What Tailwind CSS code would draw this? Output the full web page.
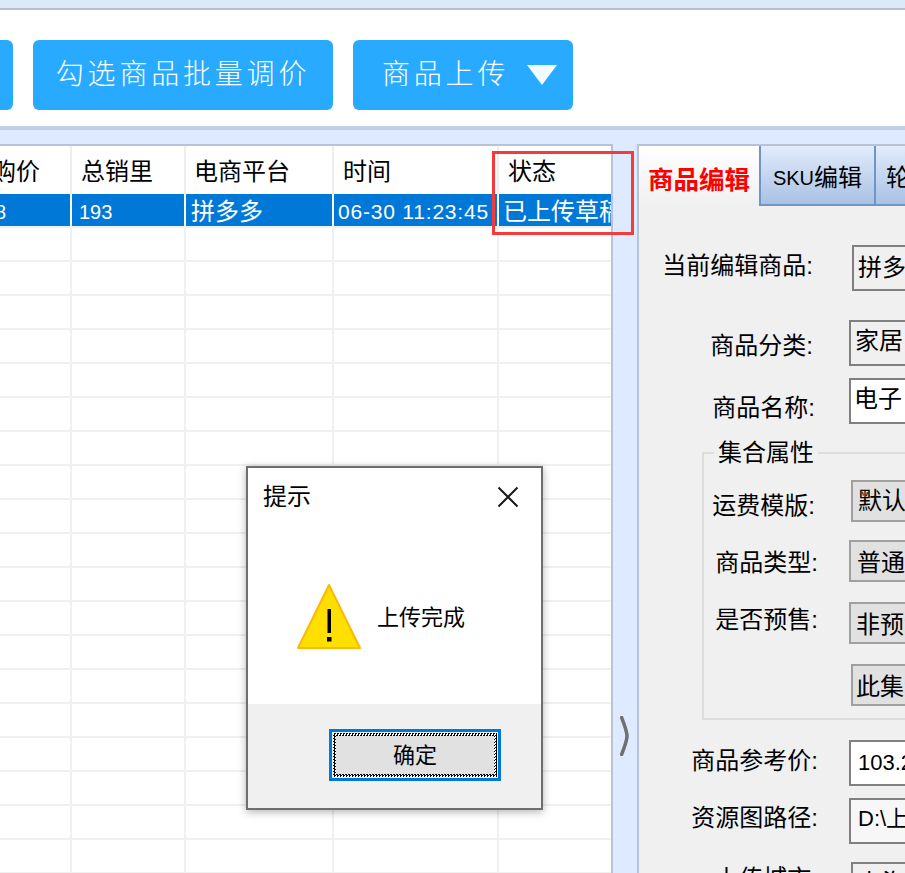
<!DOCTYPE html>
<html lang="zh-CN">
<head>
  <meta charset="UTF-8" />
  <title>商品上传</title>
  <script src="https://cdn.jsdelivr.net/npm/@tailwindcss/browser@4"></script>
</head>
<body class="relative w-[905px] h-[873px] overflow-hidden bg-[#deeaff] text-black text-[24px] leading-[24px] font-['Liberation_Sans','Noto_Sans_CJK_SC',sans-serif]">

  <!-- top strip -->
  <div class="h-[10px] bg-[#dce9f6] border-b-2 border-[#b9bfd2]"></div>

  <!-- toolbar -->
  <div class="h-[120px] bg-white border-b-4 border-[#bfd0e6] pt-[30px] flex gap-[20px] items-start text-white text-[28px] leading-[70px] tracking-[3.8px] font-light">
    <div class="w-[13px] h-[70px] bg-[#27aaff] rounded-r-[6px]"></div>
    <div class="w-[300px] h-[70px] bg-[#27aaff] rounded-[6px] text-center">勾选商品批量调价</div>
    <div class="w-[220px] h-[70px] bg-[#27aaff] rounded-[6px] flex items-center pl-[29px]">
      <span>商品上传</span>
      <svg class="ml-[18px]" width="30" height="22" viewBox="0 0 30 22"><path d="M0 1H30L15 21Z" fill="#f2fbff"/></svg>
    </div>
  </div>

  <div class="flex items-start pt-[14px]">
    <!-- table -->
    <div class="w-[613px] h-[729px] bg-white border-t-2 border-r-2 border-[#b9c2d6] overflow-hidden shrink-0">
      <div class="grid grid-cols-[72px_114px_148px_165px_112px] h-[48px] items-center">
        <div class="h-full border-r-2 border-[#eeeeee] flex items-center justify-end pt-[3px] pr-[30px] overflow-hidden whitespace-nowrap">购价</div>
        <div class="h-full border-r-2 border-[#eeeeee] flex items-center pt-[3px] pl-[9px]">总销里</div>
        <div class="h-full border-r-2 border-[#eeeeee] flex items-center pt-[3px] pl-[8px]">电商平台</div>
        <div class="h-full border-r-2 border-[#eeeeee] flex items-center pt-[3px] pl-[9px]">时间</div>
        <div class="h-full flex items-center pt-[3px] pl-[9px]">状态</div>
      </div>
      <div class="grid grid-cols-[72px_114px_148px_165px_112px] h-[34px] border-b-2 border-[#f0f0f0] text-white">
        <div class="h-[32px] border-r-2 border-white bg-[#0078d7] text-[20px] leading-[36px] overflow-hidden"><span class="block -ml-[5px]">8</span></div>
        <div class="h-[32px] border-r-2 border-white bg-[#0078d7] text-[20px] leading-[36px] pl-[7px]">193</div>
        <div class="h-[32px] border-r-2 border-white bg-[#0078d7] leading-[36px] pl-[5px]">拼多多</div>
        <div class="h-[32px] border-r-2 border-white bg-[#0078d7] text-[21px] tracking-[0.8px] leading-[36px] pl-[4px] whitespace-nowrap overflow-hidden">06-30 11:23:45</div>
        <div class="h-[32px] bg-[#0078d7] leading-[36px] pl-[4px] whitespace-nowrap overflow-hidden">已上传草稿</div>
      </div>
      <div id="rows"></div>
    </div>

    <!-- splitter -->
    <div class="w-[24px] h-[729px] flex items-start justify-center pt-[572px] shrink-0">
      <svg width="10" height="40" viewBox="0 0 10 40"><path d="M1 0C5 10 7 15 7 20C7 25 5 30 1 40" fill="none" stroke="#707070" stroke-width="3.5"/></svg>
    </div>

    <!-- right panel -->
    <div class="w-[400px] h-[729px] bg-[#f0f0f0] border-t-2 border-l-2 border-[#b9c2d6] shrink-0 overflow-hidden">
      <div class="flex h-[60px] items-stretch">
        <div class="w-[120px] pt-[8px] bg-gradient-to-b from-white to-[#f0f0f0] text-[#ff0000] text-[25.5px] font-bold flex items-center justify-center">商品编辑</div>
        <div class="w-[115px] pt-[6px] border-l-2 border-b-2 border-[#6f94c6] bg-gradient-to-b from-[#e2ecfb] to-[#a9c1e4] flex items-center justify-center"><span class="text-[20px]">SKU</span>编辑</div>
        <div class="w-[160px] pt-[6px] border-l-2 border-b-2 border-[#6f94c6] bg-gradient-to-b from-[#e2ecfb] to-[#a9c1e4] flex items-center pl-[10px]">轮播图</div>
      </div>

      <div class="pt-[39px]">
        <div class="flex h-[46px]">
          <div class="w-[174px] text-right pt-[9px] shrink-0">当前编辑商品:</div>
          <div class="ml-[39px] w-[200px] h-[46px] shrink-0 border-2 border-[#808080] bg-[#f0f0f0] pl-[4px] leading-[42px]">拼多多</div>
        </div>
        <div class="flex h-[46px] mt-[29px]">
          <div class="w-[174px] text-right pt-[14px] shrink-0">商品分类:</div>
          <div class="ml-[36px] w-[200px] h-[46px] shrink-0 border-2 border-[#808080] bg-[#f0f0f0] pl-[4px] leading-[38px]">家居</div>
        </div>
        <div class="flex h-[46px] mt-[12px]">
          <div class="w-[176px] text-right pt-[18px] shrink-0">商品名称:</div>
          <div class="ml-[34px] w-[200px] h-[46px] shrink-0 border-2 border-[#808080] bg-white pl-[3px] leading-[38px]">电子</div>
        </div>

        <!-- group box -->
        <div class="ml-[63px] mt-[28px] w-[300px] h-[268px] border-2 border-[#dcdcdc]">
          <div class="-mt-[13px] ml-[10px] w-fit px-[4px] bg-[#f0f0f0]">集合属性</div>
          <div class="flex h-[42px] mt-[15px]">
            <div class="w-[111px] text-right pt-[14px] shrink-0">运费模版:</div>
            <div class="ml-[36px] w-[200px] h-[42px] shrink-0 border-2 border-[#a0a0a0] bg-[#e1e1e1] pl-[5px] leading-[38px]">默认</div>
          </div>
          <div class="flex h-[42px] mt-[18px]">
            <div class="w-[114px] text-right pt-[11px] shrink-0">商品类型:</div>
            <div class="ml-[31px] w-[200px] h-[42px] shrink-0 border-2 border-[#a0a0a0] bg-[#e1e1e1] pl-[6px] leading-[42px]">普通</div>
          </div>
          <div class="flex h-[42px] mt-[20px]">
            <div class="w-[114px] text-right pt-[6px] shrink-0">是否预售:</div>
            <div class="ml-[31px] w-[200px] h-[42px] shrink-0 border-2 border-[#a0a0a0] bg-[#e1e1e1] pl-[5px] leading-[42px]">非预售</div>
          </div>
          <div class="ml-[147px] mt-[20px] w-[200px] h-[42px] border-2 border-[#a0a0a0] bg-[#e1e1e1] pl-[3px] leading-[42px]">此集合</div>
        </div>

        <div class="flex h-[46px] mt-[20px]">
          <div class="w-[179px] text-right pt-[9px] shrink-0">商品参考价:</div>
          <div class="ml-[31px] w-[200px] h-[46px] shrink-0 border-2 border-[#808080] bg-white pl-[7px] text-[22px] leading-[42px]">103.2</div>
        </div>
        <div class="flex h-[46px] mt-[12px]">
          <div class="w-[179px] text-right pt-[8px] shrink-0">资源图路径:</div>
          <div class="ml-[31px] w-[200px] h-[46px] shrink-0 border-2 border-[#808080] bg-[#f7f7f7] pl-[7px] text-[22px] leading-[38px]">D:\上传</div>
        </div>
        <div class="flex h-[46px] mt-[18px]">
          <div class="w-[179px] text-right pt-[5px] shrink-0">上传城市:</div>
          <div class="ml-[33px] w-[200px] h-[46px] shrink-0 border-2 border-[#808080] bg-[#f0f0f0] pl-[5px] leading-[38px]">上海</div>
        </div>
      </div>
    </div>
  </div>

  <!-- red highlight over the status column -->
  <div class="absolute left-[492px] top-[151px] w-[142px] h-[84px] border-[3px] border-[#f43a3a]"></div>

  <!-- message box -->
  <div class="absolute left-[246px] top-[466px] w-[297px] h-[344px] border-2 border-[#6e6e6e] bg-[#f0f0f0] shadow-[0_2px_8px_rgba(0,0,0,0.3)] flex flex-col">
    <div class="h-[236px] bg-white">
      <div class="flex items-center justify-between pl-[15px] pr-[22px] pt-[17px]">
        <span>提示</span>
        <svg width="22" height="22" viewBox="0 0 22 22"><path d="M1.5 1.5L20.5 20.5M20.5 1.5L1.5 20.5" stroke="#1a1a1a" stroke-width="2" fill="none"/></svg>
      </div>
      <div class="flex items-start pl-[49px] pt-[75px]">
        <svg width="64" height="65" viewBox="0 0 64 65">
          <path d="M32 1L63 64H1Z" fill="#ffdf00" stroke="#fdb900" stroke-width="2" stroke-linejoin="round"/>
          <rect x="30.5" y="25" width="3.5" height="24" fill="#000"/>
          <rect x="30" y="53" width="4.5" height="4.5" fill="#000"/>
        </svg>
        <span class="ml-[16px] mt-[23px] text-[22px] leading-[22px]">上传完成</span>
      </div>
    </div>
    <div class="flex-1 pt-[25px] pl-[81px]">
      <div class="w-[172px] h-[52px] border-[3px] border-[#0078d7] p-[1px]">
        <!-- focus rectangle: checker pattern showing round the face -->
        <div class="h-full p-[3px] bg-[repeating-conic-gradient(#000_0_25%,#fff_0_50%)] bg-[length:3px_3px]">
          <div class="h-full bg-[#e1e1e1] text-center text-[22px] leading-[39px]">确定</div>
        </div>
      </div>
    </div>
  </div>

  <script>
    // empty grid rows under the selected one
    let html = '';
    for (let i = 0; i < 20; i++) {
      html += '<div class="grid grid-cols-[72px_114px_148px_165px_112px] h-[34px] border-b-2 border-[#f0f0f0]">' +
        '<div class="border-r-2 border-[#f0f0f0]"></div><div class="border-r-2 border-[#f0f0f0]"></div>' +
        '<div class="border-r-2 border-[#f0f0f0]"></div><div class="border-r-2 border-[#f0f0f0]"></div><div></div></div>';
    }
    document.getElementById('rows').innerHTML = html;
  </script>
</body>
</html>
